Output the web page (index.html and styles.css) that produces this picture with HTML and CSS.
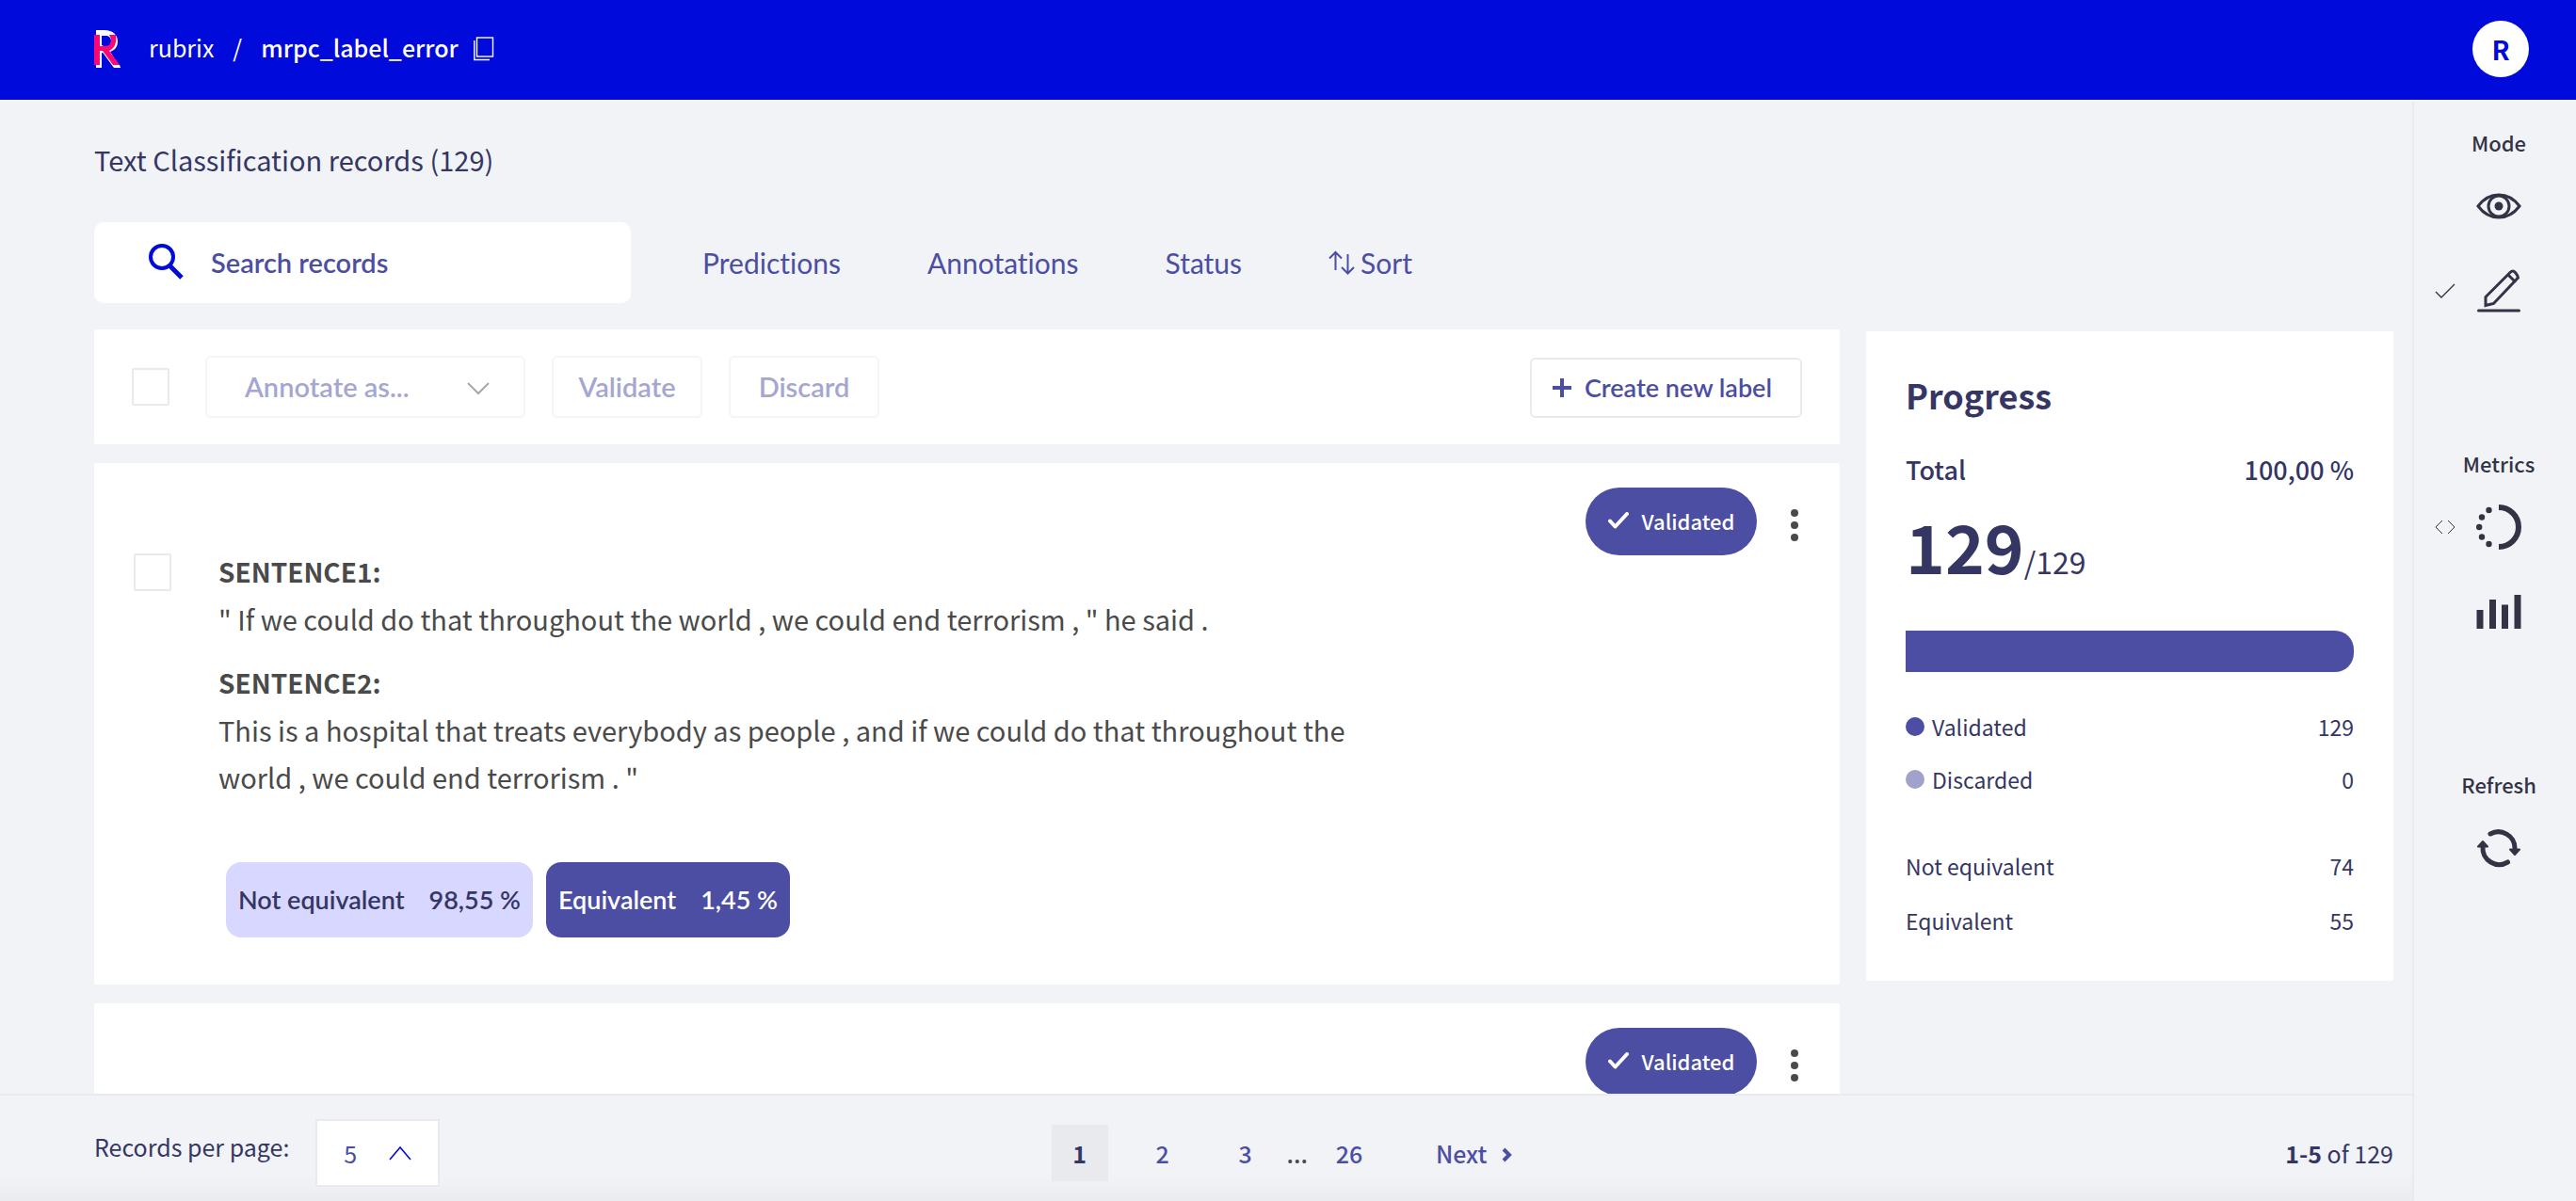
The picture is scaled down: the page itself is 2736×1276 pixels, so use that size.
FILE: index.html
```html
<!DOCTYPE html>
<html lang="en">
<head>
<meta charset="utf-8">
<title>mrpc_label_error</title>
<link rel="stylesheet" href="styles.css">
</head>
<body>
<header class="topbar">
  <a class="logo" href="#" aria-label="Home">
    <svg width="28" height="40" viewBox="0 0 28 40">
      <path fill="#fff" d="M2 0h9c9 0 14 5 14 12 0 6-3 9-8 11l11 17h-7L9 24l-1 1v15H2z"/>
      <path fill="#000adb" d="M8 6h6c3 1 4 3 4 6 0 4-3 6-6 6L8 16zM8 24l2 1 10 15H8z"/>
      <path fill="#ff0675" d="M0 5h6v12h6c4 0 6-3 6-6 0-2-1-4-2-6h7c1 9-1 14-7 17l11 15h-7L9 22H6v15H0z"/>
      <path fill="#fff" d="M6 5h2v11H6zM6 24h2v16H6zM21 37h6l1 3h-6z"/>
    </svg>
  </a>
  <nav class="crumbs" aria-label="Breadcrumb">
    <a href="#">rubrix</a>
    <span>/</span>
    <a class="crumbs-current" href="#">mrpc_label_error</a>
  </nav>
  <button class="icon-button" type="button" aria-label="Copy name">
    <svg width="22" height="26" viewBox="0 0 22 26" fill="none" stroke="#fff"><rect x="3.5" y="1" width="17" height="20" stroke-width="1.4"/><path d="M.8 4v20.5H17" stroke-width="1.4"/></svg>
  </button>
  <button class="avatar" type="button">R</button>
</header>

<div class="shell">
  <main class="main">
    <h1 class="title">Text Classification records (129)</h1>
    <div class="filters">
      <label class="search">
        <svg width="40" height="42" viewBox="0 0 40 42" fill="none" stroke="#000adb"><circle cx="14" cy="15" r="12" stroke-width="4"/><path d="M22.500 24.500 35 37" stroke-width="5"/></svg>
        <input type="text" placeholder="Search records" aria-label="Search records">
      </label>
      <button class="filter" type="button">Predictions</button>
      <button class="filter" type="button">Annotations</button>
      <button class="filter" type="button">Status</button>
      <button class="filter" type="button"><svg width="28" height="26" viewBox="0 0 28 26" fill="none" stroke="#4c4ea3" stroke-width="2"><path d="M7.500 21V2M1 8.500 7.500 2 14 8.500M20.500 4v20M14 18l6.500 6.500L27 18"/></svg>Sort</button>
    </div>

    <div class="columns">
      <div class="records">
        <section class="card toolbar">
          <input class="tick" type="checkbox" aria-label="Select all records">
          <div class="dropdown dropdown-annotate">
            <select disabled aria-label="Annotate as"><option>Annotate as...</option></select>
            <svg width="24" height="14" viewBox="0 0 24 14" fill="none" stroke="#a9a9a9" stroke-width="2"><path d="m1 1 11 11L23 1"/></svg>
          </div>
          <button class="action" type="button" disabled>Validate</button>
          <button class="action" type="button" disabled>Discard</button>
          <button class="create" type="button"><svg width="20" height="20" viewBox="0 0 20 20" stroke="#4c4ea3" stroke-width="4"><path d="M10 0v20M0 10h20"/></svg>Create new label</button>
        </section>

        <article class="card record">
          <div class="record-head">
            <span class="badge"><svg width="22" height="18" viewBox="0 0 22 18" fill="none" stroke="#fff" stroke-width="4" stroke-linecap="round" stroke-linejoin="round"><path d="m2 9.500 5.500 6L20 2"/></svg>Validated</span>
            <button class="more" type="button" aria-label="More"><svg width="8" height="36" viewBox="0 0 8 36" fill="#4a4a4a"><circle cx="4" cy="5" r="4"/><circle cx="4" cy="18" r="4"/><circle cx="4" cy="31" r="4"/></svg></button>
          </div>
          <div class="record-body">
            <input class="tick" type="checkbox" aria-label="Select record">
            <div class="text">
              <h2>SENTENCE1:</h2>
              <p>" If we could do that throughout the world , we could end terrorism , " he said .</p>
              <h2>SENTENCE2:</h2>
              <p>This is a hospital that treats everybody as people , and if we could do that throughout the world , we could end terrorism . "</p>
            </div>
          </div>
          <div class="chips">
            <button class="chip" type="button"><span>Not equivalent</span><span>98,55 %</span></button>
            <button class="chip chip-on" type="button"><span>Equivalent</span><span>1,45 %</span></button>
          </div>
        </article>

        <article class="card record">
          <div class="record-head">
            <span class="badge"><svg width="22" height="18" viewBox="0 0 22 18" fill="none" stroke="#fff" stroke-width="4" stroke-linecap="round" stroke-linejoin="round"><path d="m2 9.500 5.500 6L20 2"/></svg>Validated</span>
            <button class="more" type="button" aria-label="More"><svg width="8" height="36" viewBox="0 0 8 36" fill="#4a4a4a"><circle cx="4" cy="5" r="4"/><circle cx="4" cy="18" r="4"/><circle cx="4" cy="31" r="4"/></svg></button>
          </div>
        </article>
      </div>

      <aside class="card progress">
        <h2>Progress</h2>
        <div class="row total"><span>Total</span><span>100,00 %</span></div>
        <div class="count"><strong>129</strong>/129</div>
        <div class="bar"></div>
        <div class="row"><span class="key"><i class="dot"></i>Validated</span><span>129</span></div>
        <div class="row"><span class="key"><i class="dot dot-soft"></i>Discarded</span><span>0</span></div>
        <div class="row row-first"><span>Not equivalent</span><span>74</span></div>
        <div class="row"><span>Equivalent</span><span>55</span></div>
      </aside>
    </div>
  </main>

  <footer class="footer">
    <div class="per-page">
      <label for="per-page">Records per page:</label>
      <div class="dropdown dropdown-page">
        <select id="per-page"><option>5</option></select>
        <svg width="24" height="16" viewBox="0 0 24 16" fill="none" stroke="#000adb" stroke-width="1.600"><path d="M1 15 12 2l11 13"/></svg>
      </div>
    </div>
    <nav class="pages" aria-label="Pagination">
      <a class="page page-on" href="#">1</a>
      <a class="page" href="#">2</a>
      <a class="page" href="#">3</a>
      <span class="ellipsis">...</span>
      <a class="page page-last" href="#">26</a>
      <a class="next" href="#">Next<svg width="12" height="16" viewBox="0 0 12 16" fill="none" stroke="#4c4ea3" stroke-width="4"><path d="m2 2 6 6-6 6"/></svg></a>
    </nav>
    <p class="range"><strong>1-5</strong> of 129</p>
  </footer>

  <aside class="sidebar">
    <section class="tools">
      <h2>Mode</h2>
      <button class="tool" type="button" aria-label="Explore"><svg width="48" height="48" viewBox="0 0 48 48" fill="none" stroke="#333346" stroke-width="3"><path d="M2 24C8 16 16 12 24 12s16 4 22 12c-6 8-14 12-22 12S8 32 2 24z"/><circle cx="24" cy="24" r="11"/><circle cx="24" cy="24" r="4.500" fill="#333346" stroke="none"/></svg></button>
      <button class="tool" type="button" aria-label="Annotate"><svg class="mark" width="22" height="16" viewBox="0 0 22 16" fill="none" stroke="#333346" stroke-width="1.400"><path d="m1 9 6 6L21 1"/></svg><svg width="48" height="48" viewBox="0 0 48 48" fill="none" stroke="#333346" stroke-width="3"><path d="M10 39.500v-9L36 4.500q3-3 5.500 0t3 5.500l-26 27.500zM34 7l8 8"/><path d="M2.500 45h43" stroke-linecap="round"/></svg></button>
    </section>
    <section class="tools">
      <h2>Metrics</h2>
      <button class="tool" type="button" aria-label="Progress"><svg class="mark" width="22" height="16" viewBox="0 0 22 16" fill="none" stroke="#333346"><path d="M8 1 1 8l7 7M14 1l7 7-7 7"/></svg><svg width="48" height="48" viewBox="0 0 48 48" fill="#333346"><path d="M24 3a21 21 0 0 1 0 42" fill="none" stroke="#333346" stroke-width="6"/><circle cx="13.500" cy="6" r="3.200"/><circle cx="6" cy="13.500" r="3.200"/><circle cx="3.200" cy="24" r="3.200"/><circle cx="6" cy="34.500" r="3.200"/><circle cx="13.500" cy="42" r="3.200"/></svg></button>
      <button class="tool" type="button" aria-label="Stats"><svg width="48" height="48" viewBox="0 0 48 48" fill="#333346"><path d="M.5 22h7v20h-7zM14 11h7v31h-7zM27 16.500h7V42h-7zM40.500 6h7v36h-7z"/></svg></button>
    </section>
    <section class="tools">
      <h2>Refresh</h2>
      <button class="tool" type="button" aria-label="Refresh"><svg width="48" height="48" viewBox="0 0 48 48" fill="none" stroke="#333346" stroke-width="5" stroke-linecap="round"><path d="M15 9A17.500 17.500 0 0 1 41 24M33.500 39A17.500 17.500 0 0 1 7 23"/><path d="M36 25.500h10l-5 5.500zM2 22.500h10L7 17z" fill="#333346" stroke-width="2" stroke-linejoin="round"/></svg></button>
    </section>
  </aside>
</div>
</body>
</html>
```
FILE: styles.css
```css
* {
  box-sizing: border-box;
}

:root {
  --blue: #000adb;
  --violet: #4c4ea3;
  --ink: #353664;
  --line: #e9eaed;
  --page: #f1f3f7;
  --sans: "Noto Sans CJK SC", sans-serif;
  --round: Lato, sans-serif;
}

body {
  display: flex;
  flex-direction: column;
  height: 100vh;
  margin: 0;
  overflow: hidden;
  background: var(--page);
  color: var(--ink);
  font-family: var(--sans);
  font-size: 25px;
  font-variant-ligatures: none;
  line-height: 36px;
}

h1,
h2,
p {
  margin: 0;
}

a {
  color: inherit;
  text-decoration: none;
}

button,
select,
input {
  margin: 0;
  padding: 0;
  border: 0;
  background: none;
  color: inherit;
  font: inherit;
  font-variant-ligatures: none;
  opacity: 1;
}

svg {
  display: block;
  flex: none;
}

.topbar {
  display: flex;
  align-items: center;
  flex: none;
  height: 106px;
  padding: 0 50px 2px 100px;
  background: var(--blue);
  color: #fff;
}

.crumbs {
  display: flex;
  gap: 20px;
  padding-bottom: 4px;
  margin: 0 16px 0 30px;
}

.crumbs-current {
  font-weight: 500;
}

.avatar {
  width: 60px;
  height: 60px;
  margin-left: auto;
  border-radius: 50%;
  background: #fff;
  color: var(--blue);
  font-size: 28px;
  font-weight: 700;
}

.shell {
  display: grid;
  flex: 1;
  grid-template-columns: minmax(0, 1fr) 174px;
  grid-template-rows: minmax(0, 1fr) auto;
  min-height: 0;
}

.main {
  padding: 42px 20px 0 100px;
  overflow: hidden;
}

.title {
  font-size: 29px;
  font-weight: 400;
  line-height: 42px;
}

.filters {
  display: flex;
  align-items: center;
  gap: 92px;
  height: 86px;
  margin: 46px 0 28px;
}

.search {
  display: flex;
  align-items: center;
  gap: 26px;
  width: 570px;
  height: 100%;
  padding-left: 58px;
  margin-right: -16px;
  border-radius: 10px;
  background: #fff;
}

.search input {
  flex: 1;
  min-width: 0;
  color: var(--violet);
  font-family: var(--round);
  font-size: 29px;
  font-weight: 600;
  outline: 0;
}

.search input::placeholder {
  color: var(--violet);
  opacity: 1;
}

.filter {
  display: flex;
  align-items: center;
  gap: 6px;
  color: var(--violet);
  font-family: var(--round);
  font-size: 30px;
}

.columns {
  display: grid;
  grid-template-columns: minmax(0, 1fr) 560px;
  align-items: start;
  gap: 28px;
}

.card {
  border-radius: 2px;
  background: #fff;
}

.records {
  display: grid;
  gap: 20px;
}

.toolbar {
  display: flex;
  align-items: center;
  gap: 28px;
  height: 122px;
  padding: 0 40px;
}

.tick {
  flex: none;
  width: 40px;
  height: 40px;
  appearance: none;
  border: 2px solid var(--line);
  border-radius: 2px;
  background: #fff;
}

.dropdown {
  display: grid;
  align-items: center;
}

.dropdown select,
.dropdown svg {
  grid-area: 1 / 1;
}

.dropdown svg {
  justify-self: end;
  pointer-events: none;
}

.dropdown select {
  width: 100%;
  appearance: none;
}

.dropdown-annotate {
  width: 340px;
  margin-left: 10px;
}

.dropdown-annotate select {
  height: 66px;
  padding: 0 40px;
  border: 2px solid #f5f5f6;
  border-radius: 6px;
  color: #a5a6d1;
  font-family: var(--round);
  font-size: 29px;
  font-weight: 600;
}

.dropdown-annotate svg {
  margin: 4px 38px 0 0;
}

.action {
  width: 160px;
  height: 66px;
  border: 2px solid #f5f5f6;
  border-radius: 6px;
  color: #a5a6d1;
  font-family: var(--round);
  font-size: 29px;
  font-weight: 600;
}

.create {
  display: flex;
  align-items: center;
  gap: 14px;
  height: 64px;
  padding: 0 30px 0 22px;
  margin: 2px 0 0 auto;
  border: 2px solid var(--line);
  border-radius: 6px;
  color: var(--violet);
  font-family: var(--round);
  font-size: 27px;
  font-weight: 600;
}

.record {
  padding: 26px 44px 50px 42px;
}

.record-head {
  display: flex;
  align-items: center;
  justify-content: flex-end;
  gap: 36px;
}

.badge {
  display: flex;
  align-items: center;
  justify-content: center;
  gap: 14px;
  width: 182px;
  height: 72px;
  padding-bottom: 2px;
  border-radius: 36px;
  background: var(--violet);
  color: #fff;
  font-size: 22px;
  font-weight: 500;
}

.more {
  padding-top: 8px;
}

.record-body {
  display: flex;
  align-items: flex-start;
  gap: 50px;
}

.record-body .tick {
  margin-top: -2px;
}

.text {
  max-width: 1210px;
  margin-top: -8px;
  color: #4a4a4a;
  font-size: 29px;
  line-height: 50px;
}

.text h2 {
  font-size: 28px;
  font-weight: 700;
}

.text p + h2 {
  margin-top: 18px;
}

.chips {
  display: flex;
  gap: 14px;
  margin: 66px 0 0 98px;
}

.chip {
  display: flex;
  align-items: center;
  gap: 26px;
  height: 80px;
  padding: 0 13px;
  border-radius: 16px;
  background: #d8d7ff;
  font-family: var(--round);
  font-size: 27px;
  font-weight: 600;
}

.chip-on {
  background: var(--violet);
  color: #fff;
}

.progress {
  padding: 40px 42px 26px;
  margin-top: 2px;
}

.progress h2 {
  margin-bottom: 35px;
  font-size: 36px;
  font-weight: 700;
  line-height: 54px;
}

.row {
  display: flex;
  justify-content: space-between;
  margin-bottom: 20px;
  font-size: 23px;
}

.row-first {
  margin: 56px 0 22px;
}

.total {
  margin-bottom: 18px;
  font-size: 27px;
  font-weight: 500;
}

.count {
  font-size: 32px;
  line-height: 88px;
}

.count strong {
  font-size: 71px;
}

.bar {
  height: 44px;
  margin: 30px 0 40px;
  border-radius: 0 20px 20px 0;
  background: var(--violet);
}

.key {
  display: flex;
  align-items: center;
  gap: 8px;
}

.dot {
  width: 20px;
  height: 20px;
  border-radius: 50%;
  background: var(--violet);
}

.dot-soft {
  background: #a1a2cc;
}

.footer {
  display: grid;
  grid-template-columns: 1fr auto 1fr;
  align-items: center;
  height: 114px;
  padding: 10px 20px 0 100px;
  border-top: 2px solid var(--line);
  background: linear-gradient(to bottom, transparent 84px, #ebecf0);
}

.per-page {
  display: flex;
  align-items: center;
  gap: 28px;
}

.per-page label {
  padding-bottom: 14px;
}

.dropdown-page {
  width: 132px;
}

.dropdown-page select {
  height: 72px;
  padding: 0 28px;
  border: 2px solid var(--line);
  background: #fff;
  color: var(--violet);
}

.dropdown-page svg {
  margin-right: 30px;
}

.pages {
  display: flex;
  align-items: center;
  margin-left: 82px;
  color: var(--violet);
  font-weight: 500;
}

.page {
  width: 60px;
  margin-right: 28px;
  line-height: 60px;
  text-align: center;
}

.page-on {
  background: var(--line);
  color: var(--ink);
  font-weight: 700;
}

.ellipsis {
  margin: 0 14px 0 -14px;
  color: #4a4a4a;
}

.page-last {
  margin-right: 62px;
}

.next {
  display: flex;
  align-items: center;
  gap: 16px;
}

.next svg {
  margin-top: 4px;
}

.range {
  text-align: right;
}

.sidebar {
  grid-area: 1 / 2 / 3 / 3;
  padding: 26px 0 0 8px;
  margin-top: 2px;
  border-left: 2px solid var(--line);
  color: #333346;
}

.tools {
  display: flex;
  flex-direction: column;
  align-items: center;
  height: 341px;
}

.tools h2 {
  margin-bottom: 27px;
  font-size: 22px;
  font-weight: 500;
  line-height: 34px;
}

.tool {
  position: relative;
  width: 48px;
  height: 48px;
  margin-bottom: 42px;
}

.mark {
  position: absolute;
  top: 16px;
  left: -44px;
}
```
